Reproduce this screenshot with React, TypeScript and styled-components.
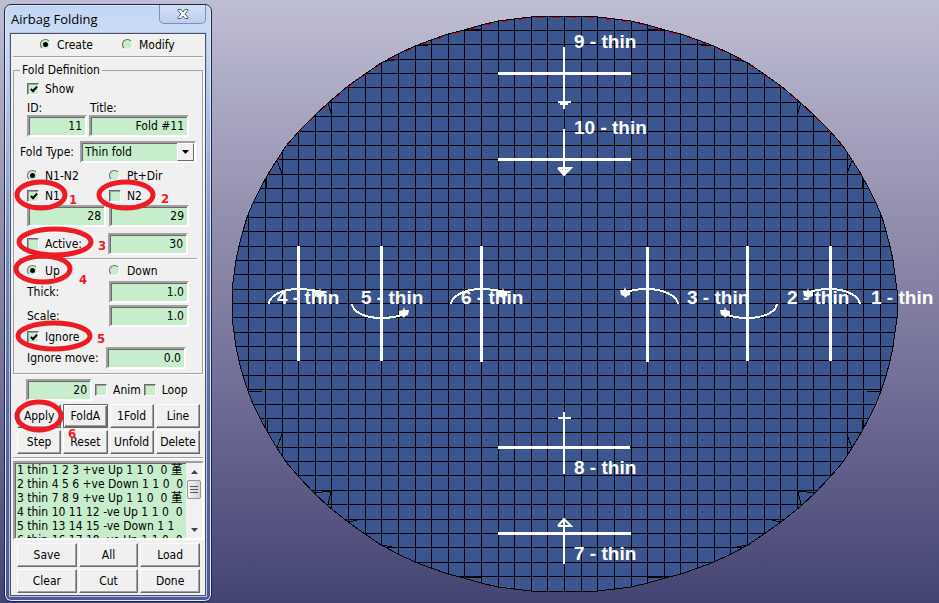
import React from 'react';
import styled, { createGlobalStyle, css } from 'styled-components';

const UI_FONT = '"DejaVu Sans Condensed", "DejaVu Sans", "Noto Sans CJK SC", sans-serif';
const FACE = '#f0f0f0';
const FIELD = '#c7edcc';
const DARK = '#696969';
const MID = '#a0a0a0';
const RED = '#ed1c24';

const GlobalStyle = createGlobalStyle`
  *, *::before, *::after { box-sizing: border-box; }
  html, body, #root { height: 100%; }
  body {
    margin: 0;
    overflow: hidden;
    font: 12px/14px ${UI_FONT};
    color: #000;
  }
  button, input, select { font: inherit; color: inherit; }
`;

const Page = styled.div`
  display: flex;
  min-height: 100%;
  height: 100vh;
  background: linear-gradient(#bebed4 0%, #8b88a8 42%, #74719a 62%, #444474 100%);
`;

const Dialog = styled.section`
  position: relative;
  flex: none;
  width: 208px;
  margin: 4px 0 1px 4px;
  padding: 0 5px 5px;
  display: flex;
  flex-direction: column;
  border: 1px solid #22283c;
  border-radius: 7px;
  box-shadow: inset 0 0 0 1px #dbe8fb;
  background: linear-gradient(#c3d5f5 0, #cbdcf8 28px, #a9bde6 120px, #7487bd 260px, #5a68a4 420px, #4e5896 100%);
`;

const TitleBar = styled.header`
  display: flex;
  justify-content: space-between;
  height: 28px;
`;

const Title = styled.h1`
  margin: 0;
  padding-left: 1px;
  font: 13px/28px "Open Sans", "Noto Sans", sans-serif;
`;

const CloseButton = styled.button`
  display: grid;
  place-items: center;
  width: 47px;
  height: 19px;
  padding: 0;
  border: 1px solid #7f8fb4;
  border-top: 0;
  border-radius: 0 0 5px 5px;
  background: linear-gradient(#d3e0f6, #bccdee);
`;

const Client = styled.div`
  flex: 1;
  padding: 0 2px 2px;
  display: flex;
  flex-direction: column;
  border: 1px solid #4b5064;
  box-shadow: 0 0 0 1px #b5c5e8;
  background: ${FACE};
`;

const Rule = styled.hr`
  flex: none;
  height: 2px;
  margin: 0;
  border: 0;
  border-top: 1px solid ${MID};
  border-bottom: 1px solid #fff;
`;

const LowerRule = styled(Rule)`
  margin-top: 3px;
`;

const InnerRule = styled(Rule)`
  margin: 3px 0 1px;
`;

const ModeRow = styled.div`
  display: grid;
  grid-template-columns: 82px 1fr;
  align-items: center;
  height: 22px;
  padding-left: 27px;
`;

const Group = styled.fieldset`
  min-width: 0;
  margin: 5px 0 0;
  padding: 0 5px 4px;
  border: 1px solid ${MID};
  box-shadow: 1px 1px 0 #fff;
`;

const Legend = styled.legend`
  margin-left: 1px;
  padding: 0 2px;
  line-height: 14px;
`;

const Row = styled.div<{ $h?: number; $gap?: number; $indent?: number }>`
  display: flex;
  align-items: center;
  height: ${p => p.$h ?? 22}px;
  margin-top: ${p => p.$gap ?? 0}px;
  padding-left: ${p => p.$indent ?? 8}px;
`;

const Pair = styled(Row)<{ $first?: number }>`
  display: grid;
  grid-template-columns: ${p => p.$first ?? 82}px 1fr;
`;

const FrameRow = styled.div`
  display: flex;
  align-items: center;
  gap: 3px;
  margin: 5px 0 0 13px;
`;

const Choice = styled.label<{ $gap?: number }>`
  display: flex;
  align-items: center;
  gap: ${p => p.$gap ?? 6}px;
  white-space: nowrap;
`;

const Tick = styled.input.attrs({ type: 'checkbox' })`
  appearance: none;
  flex: none;
  display: grid;
  place-items: center;
  width: 12px;
  height: 12px;
  margin: 0;
  border: 1px solid;
  border-color: ${DARK} #fff #fff ${DARK};
  box-shadow: inset 1px 1px 0 ${MID};
  background: ${FIELD};
  &:checked::after {
    content: '';
    width: 4px;
    height: 7px;
    margin: -2px 0 0 1px;
    border: solid #000;
    border-width: 0 2px 2px 0;
    transform: rotate(42deg);
  }
`;

const Radio = styled.input.attrs({ type: 'radio' })`
  appearance: none;
  flex: none;
  display: grid;
  place-items: center;
  width: 11px;
  height: 11px;
  margin: 0 1px 2px 0;
  border: 1px solid;
  border-color: ${DARK} #fff #fff ${DARK};
  border-radius: 50%;
  background: ${FIELD};
  &:checked::after {
    content: '';
    width: 5px;
    height: 5px;
    border-radius: 50%;
    background: #000;
  }
`;

const sunken = css`
  border: 2px solid;
  border-color: ${MID} #fff #fff ${MID};
  box-shadow: inset 1px 1px 0 ${DARK};
  background: ${FIELD};
`;

const Field = styled.input.attrs({ type: 'text' })<{ $w: number }>`
  ${sunken}
  width: ${p => p.$w}px;
  height: 22px;
  padding: 0 3px 0 2px;
  text-align: right;
  border-radius: 0;
`;

const FieldLabel = styled.label`
  white-space: nowrap;
`;

const TypeLabel = styled(FieldLabel)`
  width: 60px;
`;

const SelectFrame = styled.span`
  ${sunken}
  display: flex;
  flex: 1;
  height: 22px;
  margin-right: 1px;
`;

const Select = styled.select`
  appearance: none;
  flex: 1;
  min-width: 0;
  padding: 0 0 0 3px;
  border: 0;
  background: transparent;
`;

const Drop = styled.span`
  display: grid;
  place-items: center;
  width: 17px;
  border: 1px solid;
  border-color: #fff ${DARK} ${DARK} #fff;
  background: ${FACE};
`;

const Buttons = styled.div<{ $cols: number }>`
  display: grid;
  grid-template-columns: repeat(${p => p.$cols}, 1fr);
  gap: 2px;
  margin: 3px 3px 0 4px;
`;

const Push = styled.button<{ $default?: boolean }>`
  height: 24px;
  padding: 0 0 1px;
  border: 1px solid;
  border-color: #fff ${DARK} ${DARK} #fff;
  border-radius: 0;
  box-shadow: inset -1px -1px 0 ${MID};
  background: ${FACE};
  white-space: nowrap;
  ${p => p.$default && css`
    border-color: ${DARK};
    box-shadow: inset 1px 1px 0 #fff, inset -1px -1px 0 ${DARK}, inset -2px -2px 0 ${MID};
  `}
`;

const ListBox = styled.div`
  ${sunken}
  display: flex;
  height: 79px;
  margin-top: 2px;
  margin-right: -1px;
`;

const Items = styled.ul`
  flex: 1;
  min-width: 0;
  height: 75px;
  margin: 0;
  padding: 0 0 0 2px;
  overflow: hidden;
  list-style: none;
  white-space: pre;
`;

const ScrollBar = styled.div`
  flex: none;
  display: flex;
  flex-direction: column;
  width: 16px;
  background: #f1f1f1;
`;

const ScrollArrow = styled.button`
  display: grid;
  place-items: center;
  height: 17px;
  padding: 0;
  border: 0;
  background: none;
`;

const Track = styled.div`
  flex: 1;
`;

const Thumb = styled.div`
  display: grid;
  place-items: center;
  width: 14px;
  height: 19px;
  margin-left: 1px;
  border: 1px solid #979797;
  border-radius: 2px;
  background: linear-gradient(90deg, #f5f5f5, #d3d3d6);
`;

const Marks = styled.svg`
  position: absolute;
  left: -1px;
  top: -1px;
  width: 208px;
  height: 598px;
  pointer-events: none;
  text {
    font: bold 13px "DejaVu Sans Condensed", "DejaVu Sans", sans-serif;
    fill: ${RED};
  }
`;

const Viewport = styled.main`
  flex: 1;
  min-width: 0;
  display: flex;
`;

const Scene = styled.svg`
  flex: 1;
  min-width: 0;
  height: 100%;
  text {
    font: bold 19px "Liberation Sans", Arial, sans-serif;
    fill: #fff;
  }
`;

const TickBox = ({ label, on, gap }: { label: string; on?: boolean; gap?: number }) => (
  <Choice $gap={gap}><Tick defaultChecked={on} />{label}</Choice>
);

const RadioBox = ({ label, name, on, gap }: { label: string; name: string; on?: boolean; gap?: number }) => (
  <Choice $gap={gap}><Radio name={name} defaultChecked={on} />{label}</Choice>
);

const folds = [
  '1 thin 1 2 3 +ve Up 1 1 0  0 堇',
  '2 thin 4 5 6 +ve Down 1 1 0  0',
  '3 thin 7 8 9 +ve Up 1 1 0  0 堇',
  '4 thin 10 11 12 -ve Up 1 1 0  0',
  '5 thin 13 14 15 -ve Down 1 1 ',
  '6 thin 16 17 18 -ve Up 1 1 0  0',
];

/* ---- mesh geometry ---- */
const CX = 564.5;
const mirror = (x: number) => 2 * CX - x;
type Pt = [number, number];

const leftEdge: Pt[] = [
  [547, 16], [531, 17], [514, 19], [498, 21], [481, 25], [464, 30], [448, 34], [431, 40], [415, 46], [398, 54],
  [381, 63], [365, 74], [348, 86], [328, 103], [314, 116], [299, 131], [286, 146], [277, 160], [268, 174],
  [260, 189], [253, 203], [247, 217], [243, 231], [239, 246], [236, 260], [234, 275], [232, 290], [232, 318],
  [234, 332], [236, 347], [239, 361], [243, 376], [248, 391], [253, 404], [260, 418], [268, 433], [277, 448],
  [286, 462], [299, 477], [314, 493], [328, 506], [348, 522], [365, 534], [381, 545], [398, 554], [415, 562],
  [431, 568], [448, 574], [464, 578], [481, 583], [498, 587], [514, 589], [531, 591], [547, 591],
];
const outline: Pt[] = [...leftEdge, ...leftEdge.slice().reverse().map(([x, y]): Pt => [mirror(x), y])];
const path = (pts: Pt[]) => 'M' + pts.map(p => p.join(' ')).join('L');

const columns = Array.from({ length: 39 }, (_, i) => Math.floor(564.6 + (i - 19) * 16.62) + 0.5);
const rows = Array.from({ length: 39 }, (_, i) => {
  const k = i - 19;
  return 303.5 + Math.sign(k) * Math.round(14.37 * Math.abs(k));
});

/* the uneven cells where the grid meets the rim, left half */
const rimCells: Pt[][] = [
  [[328, 103], [332, 116]], [[277, 160], [282, 174]], [[267, 178], [266, 189]],
  [[248, 391], [262, 391]], [[267, 420], [267, 433]], [[282, 434], [277, 448]],
  [[331, 491], [328, 505]], [[314, 493], [330, 491]], [[348, 522], [362, 519]],
  [[381, 545], [398, 548]], [[415, 562], [420, 562]], [[466, 578], [481, 577]],
  [[381, 62], [394, 60]], [[415, 46], [428, 45]], [[464, 30], [481, 29]],
];

const upperRim = leftEdge.filter(([, y]) => y < 180);
const redRim: Pt[] = [...upperRim.slice().reverse(), ...upperRim.map(([x, y]): Pt => [mirror(x), y])];

const foldLines: [number, number, number, number][] = [
  [498, 73.5, 631, 73.5], [498, 159.5, 631, 159.5], [498, 447.5, 630, 447.5], [498, 533.5, 631, 533.5],
  [298.5, 246, 298.5, 361], [381.5, 246, 381.5, 361], [481.5, 246, 481.5, 362],
  [647.5, 247, 647.5, 362], [747.5, 246, 747.5, 361], [830.5, 246, 830.5, 361],
];

const captions: [number, number, string][] = [
  [574, 48, '9 - thin'], [574, 134, '10 - thin'], [574, 474, '8 - thin'], [574, 560, '7 - thin'],
  [277, 304, '4 - thin'], [361, 304, '5 - thin'], [461, 304, '6 - thin'],
  [687, 304, '3 - thin'], [787, 304, '2 - thin'], [871, 304, '1 - thin'],
];

/* spiky arrow head; dir 1 points right, -1 left */
const head = (x: number, y: number, dir: number) =>
  'M' + ([[-5, -2], [-1, -3], [0, -6], [1, -3], [5, -3], [4, 2], [1, 3], [0, 5], [-2, 3], [-5, 2]] as Pt[])
    .map(([dx, dy]) => `${x + dx * dir} ${y + dy}`).join('L') + 'Z';

const Airbag = () => (
  <Scene viewBox="212 0 727 603" role="img" aria-label="Airbag mesh with fold lines">
    <defs>
      <clipPath id="bag"><path d={path(outline) + 'Z'} /></clipPath>
    </defs>
    <path d={path(outline) + 'Z'} fill="#3b568e" />
    <g clipPath="url(#bag)" stroke="#000" strokeWidth="1" fill="none" shapeRendering="crispEdges">
      {columns.map(x => <path key={x} d={`M${x} 10V600`} />)}
      {rows.map(y => <path key={y} d={`M225 ${y}H905`} />)}
      {rimCells.map((c, i) => (
        <path key={i} d={path(c) + path(c.map(([x, y]): Pt => [mirror(x), y]))} />
      ))}
    </g>
    <path d={path(redRim)} fill="none" stroke="#c00010" strokeDasharray="7 10" shapeRendering="crispEdges" transform="translate(0 1)" />
    <path d={path(outline) + 'Z'} fill="none" stroke="#000" shapeRendering="crispEdges" />
    <g stroke="#fff" strokeWidth="3" shapeRendering="crispEdges">
      {foldLines.map(([a, b, c, d]) => <path key={`${a}-${b}`} d={`M${a} ${b}L${c} ${d}`} />)}
    </g>
    <g stroke="#fff" strokeWidth="2" fill="none">
      <path d="M564 47V109M558 102H571M560 104H568" />
      <path d="M564 129V174M558 168H571L564 175L558 168M561 169L564 174L567 169" />
      <path d="M564 412V474M558 418H571" />
      <path d="M564 519V564M558 526H571L564 519L558 526" />
    </g>
    <g stroke="#fff" strokeWidth="2" fill="none" shapeRendering="crispEdges">
      <path d="M269 304C269 296 282 289 298 289C308 289 314 290 321 292" />
      <path d="M352 304C353 312 365 318 381 318C391 318 397 317 404 314" />
      <path d="M451 304C452 296 465 289 481 289C491 289 497 290 504 292" />
      <path d="M678 304C677 296 664 289 647 289C638 289 632 290 626 292" />
      <path d="M777 304C776 312 764 318 747 318C738 318 732 317 726 314" />
      <path d="M860 304C859 296 846 289 830 289C821 289 815 290 809 292" />
    </g>
    <path
      fill="#fff"
      d={head(320, 294, 1) + head(404, 313, 1) + head(503, 294, 1) + head(625, 293, -1) + head(725, 313, -1) + head(808, 294, -1)}
    />
    {captions.map(([x, y, t]) => <text key={t} x={x} y={y}>{t}</text>)}
  </Scene>
);

/* red rings and step numbers lying over the dialog */
const rings: [number, number, number, number][] = [
  [37, 191, 24, 13], [122, 191, 27, 13], [51, 238, 36, 13], [39, 265, 27, 13], [50, 332, 36, 13], [35, 412, 22, 14],
];
const steps: [number, number, string][] = [
  [65, 200, '1'], [157, 199, '2'], [94, 246, '3'], [75, 280, '4'], [93, 339, '5'], [64, 434, '6'],
];

export default function App() {
  return (
    <>
      <GlobalStyle />
      <Page>
        <Dialog>
          <TitleBar>
            <Title>Airbag Folding</Title>
            <CloseButton aria-label="Close">
              <svg width="12" height="10" viewBox="0 0 12 10">
                <path
                  d="M1 .5H4L6 3L8 .5H11V1.5L8 5L11 8.5V9.5H8L6 7L4 9.5H1V8.5L4 5L1 1.5Z"
                  fill="#fff" stroke="#535b70"
                />
              </svg>
            </CloseButton>
          </TitleBar>
          <Client>
            <ModeRow>
              <RadioBox name="mode" label="Create" on gap={5} />
              <RadioBox name="mode" label="Modify" gap={5} />
            </ModeRow>
            <Rule />
            <Group>
              <Legend>Fold Definition</Legend>
              <Row $h={24}><TickBox label="Show" on /></Row>
              <Pair $h={10} $first={63}>
                <FieldLabel htmlFor="id">ID:</FieldLabel>
                <FieldLabel htmlFor="title">Title:</FieldLabel>
              </Pair>
              <Pair $gap={4} $first={62}>
                <Field id="id" $w={60} defaultValue="11" />
                <Field id="title" $w={100} defaultValue="Fold #11" />
              </Pair>
              <Row $gap={4} $indent={1}>
                <TypeLabel htmlFor="type">Fold Type:</TypeLabel>
                <SelectFrame>
                  <Select id="type"><option>Thin fold</option></Select>
                  <Drop><svg width="7" height="4"><path d="M0 0H7L3.5 4Z" /></svg></Drop>
                </SelectFrame>
              </Row>
              <Pair $gap={2}>
                <RadioBox name="by" label="N1-N2" on />
                <RadioBox name="by" label="Pt+Dir" />
              </Pair>
              <Pair $h={18}>
                <TickBox label="N1" on />
                <TickBox label="N2" />
              </Pair>
              <Pair>
                <Field aria-label="N1" $w={79} defaultValue="28" />
                <Field aria-label="N2" $w={80} defaultValue="29" />
              </Pair>
              <Pair $gap={6} $first={81}>
                <TickBox label="Active:" />
                <Field aria-label="Active" $w={80} defaultValue="30" />
              </Pair>
              <InnerRule />
              <Pair $h={20}>
                <RadioBox name="dir" label="Up" on />
                <RadioBox name="dir" label="Down" />
              </Pair>
              <Pair>
                <FieldLabel htmlFor="thick">Thick:</FieldLabel>
                <Field id="thick" $w={80} defaultValue="1.0" />
              </Pair>
              <Pair $gap={2}>
                <FieldLabel htmlFor="scale">Scale:</FieldLabel>
                <Field id="scale" $w={80} defaultValue="1.0" />
              </Pair>
              <Row $h={20}><TickBox label="Ignore" on /></Row>
              <Pair $first={79}>
                <FieldLabel htmlFor="move">Ignore move:</FieldLabel>
                <Field id="move" $w={80} defaultValue="0.0" />
              </Pair>
            </Group>
            <FrameRow>
              <Field aria-label="Frames" $w={66} defaultValue="20" />
              <TickBox label="Anim" />
              <TickBox label="Loop" />
            </FrameRow>
            <Buttons $cols={4}>
              {['Apply', 'FoldA', '1Fold', 'Line', 'Step', 'Reset', 'Unfold', 'Delete'].map(t => (
                <Push key={t} $default={t === 'FoldA'}>{t}</Push>
              ))}
            </Buttons>
            <LowerRule />
            <ListBox>
              <Items>{folds.map(f => <li key={f}>{f}</li>)}</Items>
              <ScrollBar>
                <ScrollArrow aria-label="Scroll up"><svg width="7" height="4"><path d="M0 4H7L3.5 0Z" fill="#444" /></svg></ScrollArrow>
                <Track>
                  <Thumb>
                    <svg width="8" height="9"><path d="M0 1.5H8M0 4.5H8M0 7.5H8" stroke="#555" /></svg>
                  </Thumb>
                </Track>
                <ScrollArrow aria-label="Scroll down"><svg width="7" height="4"><path d="M0 0H7L3.5 4Z" fill="#444" /></svg></ScrollArrow>
              </ScrollBar>
            </ListBox>
            <Buttons $cols={3}>
              {['Save', 'All', 'Load', 'Clear', 'Cut', 'Done'].map(t => <Push key={t}>{t}</Push>)}
            </Buttons>
          </Client>
          <Marks viewBox="0 0 208 598" aria-hidden="true">
            <g fill="none" stroke={RED} strokeWidth="5">
              {rings.map(([x, y, rx, ry]) => <ellipse key={`${x}-${y}`} cx={x} cy={y} rx={rx} ry={ry} />)}
            </g>
            {steps.map(([x, y, t]) => <text key={t} x={x} y={y}>{t}</text>)}
          </Marks>
        </Dialog>
        <Viewport><Airbag /></Viewport>
      </Page>
    </>
  );
}
